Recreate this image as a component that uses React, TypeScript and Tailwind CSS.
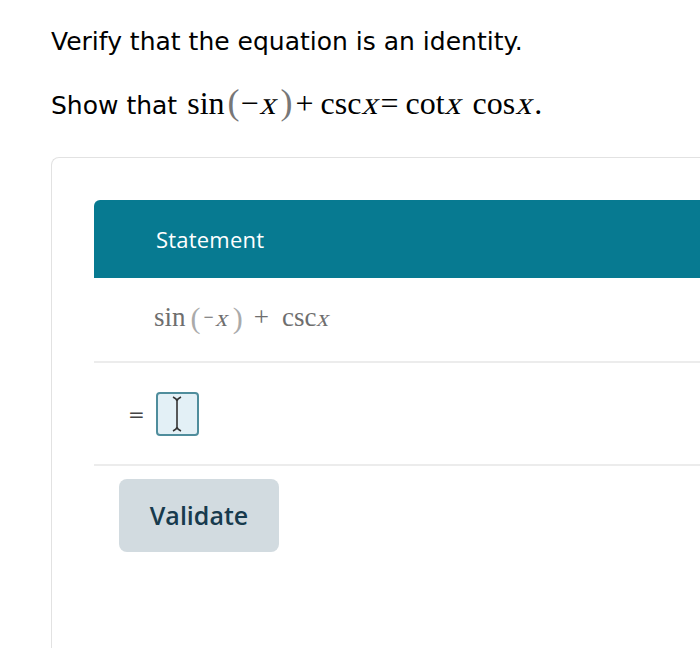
function X({ className = "" }: { className?: string }) {
  return <span className={`inline-block -skew-x-[14deg] font-['Liberation_Serif',serif] ${className}`}>x</span>;
}

export default function App() {
  return (
    <main className="w-[700px] h-[648px] overflow-hidden bg-white">
      <div className="pt-[26px] pl-[51px] font-['DejaVu_Sans',Verdana,sans-serif] text-[25px] text-black">
        <p className="leading-[32px]">Verify that the equation is an identity.</p>
        <p className="mt-[28px] leading-[32px] flex items-baseline">
          <span>Show that</span>
          <span className="ml-[10px] font-['Liberation_Serif',serif] text-[32px] whitespace-nowrap">
            <span>sin</span>
            <span className="ml-[3px] text-[#777] text-[36px]">(</span>
            <span className="ml-[1px]">−</span>
            <X className="ml-[3px]" />
            <span className="ml-[3px] text-[#777] text-[36px]">)</span>
            <span className="ml-[3px]">+</span>
            <span className="ml-[7px]">csc</span>
            <X className="ml-[3px]" />
            <span>=</span>
            <span className="ml-[7px]">cot</span>
            <X className="ml-[2px]" />
            <span className="ml-[10px]">cos</span>
            <X className="ml-[3px]" />
            <span>.</span>
          </span>
        </p>
      </div>

      <div className="ml-[51px] mt-[35px] border border-[#e2e2e2] border-r-0 border-b-0 rounded-tl-[8px] pl-[42px] pt-[42px] h-[500px]">
        <div className="rounded-tl-[6px] bg-[#077a91] h-[78px] flex items-center pl-[62px]">
          <span className="text-white text-[22px] font-['Open_Sans',sans-serif] tracking-[0.2px]">Statement</span>
        </div>
        <div className="h-[85px] border-b-2 border-[#ececec] flex items-center pl-[60px] pb-[4px] font-['Liberation_Serif',serif] text-[27px] text-[#6e6e6e] whitespace-nowrap">
          <span>sin</span>
          <span className="ml-[5px] text-[#aaa] text-[30px]">(</span>
          <span className="ml-[3px] text-[18px]">−</span>
          <X className="ml-[3px] text-[24px]" />
          <span className="ml-[4px] text-[#aaa] text-[30px]">)</span>
          <span className="ml-[11px]">+</span>
          <span className="ml-[13px]">csc</span>
          <X className="ml-[2px] text-[24px]" />
        </div>
        <div className="h-[103px] border-b-2 border-[#ececec] flex items-center pl-[34px]">
          <span className="text-[20px] text-[#444] font-['DejaVu_Sans',sans-serif] mr-[11px]">=</span>
          <div className="w-[43px] h-[44px] rounded-[4px] border-2 border-[#4f8d9c] bg-[#e3f0f6] flex items-center justify-center">
            <svg width="12" height="38" viewBox="0 0 12 38">
              <path d="M2 2 Q6 4 6 6 Q6 4 10 2 M6 6 L6 32 M2 36 Q6 34 6 32 Q6 34 10 36" stroke="#333" strokeWidth="1.6" fill="none" />
            </svg>
          </div>
        </div>
        <div className="pt-[13px] pl-[25px]">
          <button className="w-[160px] h-[73px] rounded-[8px] bg-[#d2dbe0] text-[#173a4d] text-[25px] font-['Open_Sans',sans-serif] font-semibold">
            Validate
          </button>
        </div>
      </div>
    </main>
  );
}
